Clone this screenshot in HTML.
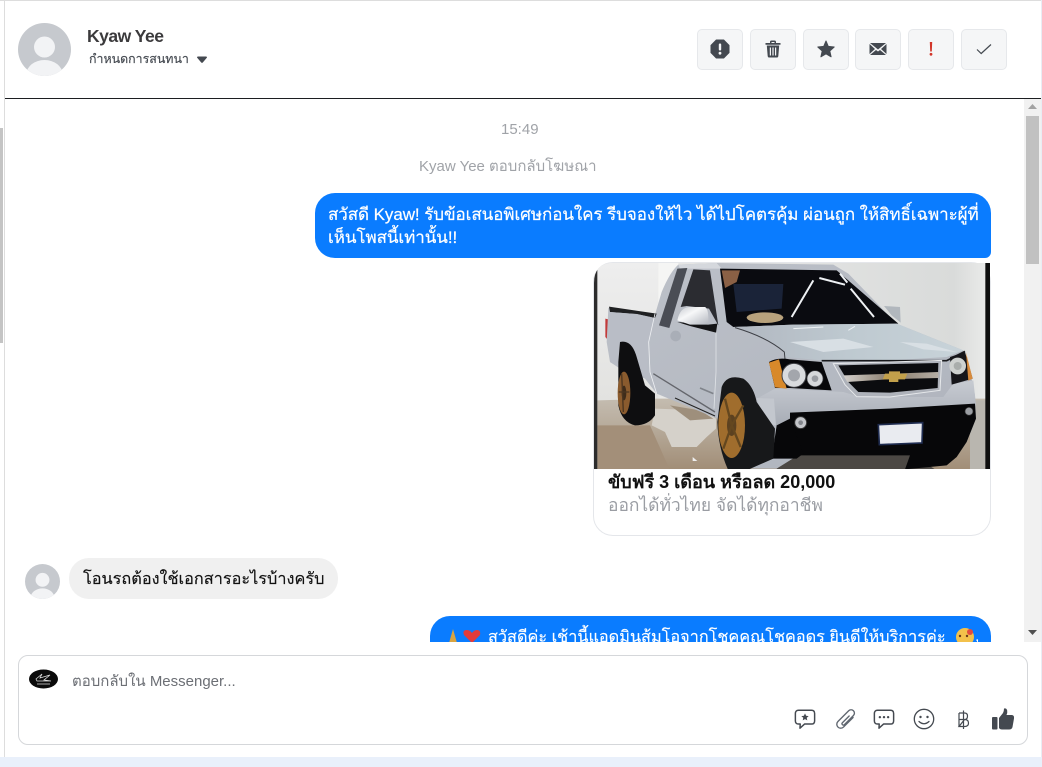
<!DOCTYPE html>
<html lang="th"><head><meta charset="utf-8"><style>
html,body{margin:0;padding:0;width:1042px;height:767px;overflow:hidden;background:#fff}
*{box-sizing:border-box}
body{font-family:"Liberation Sans","Noto Sans CJK SC",sans-serif;position:relative}
.a{position:absolute}
.t{position:absolute;white-space:nowrap}
.btn{position:absolute;top:29px;width:46px;height:41px;background:#f5f6f7;border:1px solid #e6e8eb;border-radius:5px}
.btn svg{position:absolute;left:12px;top:9px}
</style></head><body>
<div class="a" style="left:0;top:757px;width:1042px;height:10px;background:#e9f0fb"></div>
<div class="a" style="left:0;top:0;width:1042px;height:1px;background:#ddd"></div>
<div class="a" style="left:4px;top:0;width:1px;height:757px;background:#ddd"></div>
<div class="a" style="left:1041px;top:0;width:1px;height:757px;background:#e8edf5"></div>
<div class="a" style="left:0;top:128px;width:3px;height:215px;background:#c4c4c4"></div>
<div class="a" style="left:5px;top:98px;width:1036px;height:1px;background:#1c1e21"></div>

<svg class="a" style="left:18px;top:23px" width="53" height="53" viewBox="0 0 53 53"><defs><clipPath id="c1"><circle cx="26.5" cy="26.5" r="26.5"/></clipPath></defs><circle cx="26.5" cy="26.5" r="26.5" fill="#c6c9ce"/><g clip-path="url(#c1)"><circle cx="26.5" cy="24" r="10.500" fill="#f2f3f5"/><ellipse cx="26.5" cy="51" rx="18" ry="14" fill="#f2f3f5"/></g></svg>
<div class="t" style="left:87px;top:25px;font-size:17.500px;line-height:22px;font-weight:bold;color:#3b3a3c;letter-spacing:-.5px">Kyaw Yee</div>
<div class="t" style="left:89px;top:50px;font-size:12.400px;line-height:18px;color:#444950;-webkit-text-stroke:.15px #444950">กำหนดการสนทนา</div>
<svg class="a" style="left:196px;top:56px" width="12" height="8" viewBox="0 0 12 8"><path d="M1 1.500Q1 .5 2 .5H10Q11 .5 11 1.500L6.800 6.500Q6 7.300 5.200 6.500Z" fill="#444950"/></svg>

<div class="btn" style="left:697px"><svg width="20" height="20" viewBox="0 0 20 20"><path d="M6.300 1H13.700L19 6.300V13.700L13.700 19H6.300L1 13.700V6.300Z" fill="#444950" stroke="#444950" stroke-linejoin="round"/><rect x="8.800" y="4.500" width="2.400" height="7" rx="1" fill="#f5f6f7"/><circle cx="10" cy="14.200" r="1.400" fill="#f5f6f7"/></svg></div>
<div class="btn" style="left:750px"><svg width="20" height="20" viewBox="0 0 20 20" fill="#444950"><path d="M2.500 4H17.500V5.800H2.500ZM7 3Q7 1.500 8.500 1.500H11.500Q13 1.500 13 3V4H11.500V3H8.500V4H7Z"/><path d="M3.800 6.500H16.200L15.300 17.200Q15.100 18.500 14 18.500H6Q4.900 18.500 4.700 17.200ZM6.800 8.500V16.500H8V8.500ZM9.400 8.500V16.500H10.600V8.500ZM12 8.500V16.500H13.200V8.500Z" fill-rule="evenodd"/></svg></div>
<div class="btn" style="left:803px"><svg width="20" height="20" viewBox="0 0 20 20"><path d="M10 2L12.300 7.400L18.200 8L13.800 12L15.100 17.800L10 14.800L4.900 17.800L6.200 12L1.800 8L7.700 7.400Z" fill="#444950" stroke="#444950" stroke-linejoin="round"/></svg></div>
<div class="btn" style="left:855px"><svg width="20" height="20" viewBox="0 0 20 20" fill="#444950"><path d="M2 4H18L10 10.500ZM1.500 5L7 10L1.500 15ZM18.500 5V15L13 10ZM2 16L8 11L10 12.500L12 11L18 16Z"/></svg></div>
<div class="btn" style="left:908px"><svg width="20" height="20" viewBox="0 0 20 20" fill="#d2352a"><path d="M8.800 3H11.200L10.800 12.500H9.200Z"/><circle cx="10" cy="15.300" r="1.400"/></svg></div>
<div class="btn" style="left:961px"><svg width="20" height="20" viewBox="0 0 20 20"><path d="M3 10.500L7.200 14.500L17 5.500" fill="none" stroke="#444950" stroke-width="1.200"/></svg></div>

<div class="t" style="left:501px;top:121px;font-size:15px;line-height:18px;color:#a0a3a8">15:49</div>
<div class="t" style="left:419px;top:158px;font-size:15px;line-height:18px;color:#a0a3a8">Kyaw Yee ตอบกลับโฆษณา</div>

<div class="a" style="left:315px;top:193px;width:676px;height:65px;background:#0a7cff;border-radius:20px 20px 6px 20px"></div>
<div class="t" style="left:328px;top:203px;font-size:17px;line-height:23px;color:#fff;letter-spacing:-.08px;-webkit-text-stroke:.2px #fff">สวัสดี Kyaw! รับข้อเสนอพิเศษก่อนใคร รีบจองให้ไว ได้ไปโคตรคุ้ม ผ่อนถูก ให้สิทธิ์เฉพาะผู้ที่</div>
<div class="t" style="left:328px;top:226px;font-size:17px;line-height:23px;color:#fff;letter-spacing:-.08px;-webkit-text-stroke:.2px #fff">เห็นโพสนี้เท่านั้น!!</div>

<div class="a" style="left:593px;top:262px;width:398px;height:274px;border:1px solid #e4e6ea;border-radius:20px;background:#fff"></div>
<svg class="a" style="left:594px;top:263px" width="396" height="206" viewBox="0 0 396 206">
<defs>
<clipPath id="ic"><path d="M20 0H396V206H0V20Q0 0 20 0Z"/></clipPath>
<linearGradient id="wl" x1="0" y1="0" x2="1" y2="0"><stop offset="0" stop-color="#e9e9e7"/><stop offset=".5" stop-color="#e2e3e2"/><stop offset=".9" stop-color="#d9dbda"/><stop offset="1" stop-color="#eeeeed"/></linearGradient>
<linearGradient id="wl2" x1="0" y1="0" x2="0" y2="1"><stop offset="0" stop-color="#eeeeee"/><stop offset="1" stop-color="#e2e2e0"/></linearGradient>
<linearGradient id="fl" x1="0" y1="0" x2="0" y2="1"><stop offset="0" stop-color="#c4bcb0"/><stop offset=".4" stop-color="#b7ab9b"/><stop offset="1" stop-color="#a18d76"/></linearGradient>
<linearGradient id="bd" x1="0" y1="0" x2="1" y2="1"><stop offset="0" stop-color="#bdc1c9"/><stop offset="1" stop-color="#aeb3bc"/></linearGradient>
<linearGradient id="bp" x1="0" y1="0" x2="0" y2="1"><stop offset="0" stop-color="#c7cbd2"/><stop offset="1" stop-color="#a7acb5"/></linearGradient>
<linearGradient id="hd" x1="0" y1="0" x2="1" y2="0"><stop offset="0" stop-color="#b1b7c0"/><stop offset=".5" stop-color="#bec9d0"/><stop offset="1" stop-color="#c8d3d9"/></linearGradient>
<linearGradient id="mr" x1="0" y1="0" x2="1" y2="1"><stop offset="0" stop-color="#c7cad0"/><stop offset=".4" stop-color="#f7f8f9"/><stop offset="1" stop-color="#b3b7bf"/></linearGradient>
<linearGradient id="ch" x1="0" y1="0" x2="1" y2="0"><stop offset="0" stop-color="#d3d0cc"/><stop offset=".5" stop-color="#877a6a"/><stop offset="1" stop-color="#b5aea5"/></linearGradient>
</defs>
<g clip-path="url(#ic)">
<g transform="translate(-4 -1) scale(.33333)">
<rect x="12" y="0" width="1200" height="625" fill="url(#wl)"/>
<rect x="22" y="0" width="183" height="420" fill="url(#wl2)"/>
<rect x="205" y="0" width="60" height="140" fill="#f5f5f4"/>
<path d="M22 415L200 410L1188 410V625H22Z" fill="url(#fl)"/>
<rect x="1140" y="415" width="48" height="210" fill="#b9b6af"/>
<path d="M22 490H180L240 625H22Z" fill="#a38f79"/>
<path d="M195 440L340 445L378 470V500L350 525L320 555H245L225 510L185 490Z" fill="#d5d1ca"/>
<path d="M240 430L330 445L370 470L300 475Z" fill="#9e8f7c"/>
<path d="M308 585L322 597H308Z" fill="#eee"/>
<path d="M560 575H960L1040 625H560Z" fill="#4c4844"/>
<path d="M46 170L55 172L52 232L46 225Z" fill="#c23a3a"/>

<path d="M55 138L195 158L215 90Q240 30 265 8L380 3L730 8L775 35L920 185L1020 225L1120 265L1145 350L1155 400L1158 470L1130 540L1100 570L980 570L640 570L560 620H420L382 470L200 395L165 350L90 320L60 300L50 240Z" fill="url(#bd)"/>
<path d="M57 134L200 155L195 168L140 156L60 150Z" fill="#1f2022"/>
<path d="M60 150L140 156L195 168L175 240L170 325L95 320L60 300Z" fill="#b9bdc6"/>
<path d="M265 8L380 3L395 20H290L270 20Z" fill="#d5d8dd"/>
<path d="M390 20L740 25L925 185L610 188L430 195L410 180Z" fill="#0a0b10"/>
<path d="M430 66L580 66L575 140L440 150Z" fill="#1a2338"/>
<path d="M395 25H450L440 60L405 78Z" fill="#8a6045"/>
<ellipse cx="525" cy="167" rx="55" ry="16" fill="#b8a27c"/>
<path d="M605 165L670 55M688 48L765 68M750 35L772 62M782 80L852 165" stroke="#eef1f4" stroke-width="6" fill="none"/>
<path d="M882 132L930 135L932 182L905 160Z" fill="#b1b7bd"/>

<path d="M207 190L262 20L292 18L238 198Z" fill="#4a4d55"/>
<path d="M272 135L310 22L360 25L385 190L357 140L290 132Z" fill="#2b2c31"/>
<path d="M262 180L300 192L378 212L382 185L355 188Z" fill="#141416"/>
<path d="M262 175Q270 135 300 135H345Q357 140 355 188L300 188Z" fill="url(#mr)"/>
<path d="M195 155L176 240L180 330L200 395" stroke="#eef0f3" stroke-width="2.500" fill="none"/>
<path d="M378 212V330L372 440" stroke="#dfe2e6" stroke-width="2.500" fill="none"/>
<circle cx="257" cy="222" r="16" fill="#a9aeb7"/>
<path d="M190 335L375 450" stroke="#64666c" stroke-width="4" fill="none"/>
<path d="M255 408L375 462" stroke="#222" stroke-width="3" fill="none"/>
<path d="M330 378L370 395" stroke="#7f838a" stroke-width="5" fill="none"/>

<path d="M430 195L610 188L920 185L1020 225L1120 265L1070 285L900 295L695 295L585 285L580 265Q530 225 430 195Z" fill="url(#hd)"/>
<path d="M435 197Q530 225 583 270L585 292" stroke="#3d3f45" stroke-width="3" fill="none"/>
<path d="M600 240L760 230L850 255L700 270ZM930 240L1010 245L1100 270L1000 262Z" fill="#d8dfe4"/>
<path d="M695 296H1070L1125 268" stroke="#18191c" stroke-width="5" fill="none"/>
<path d="M775 205L795 193M610 200L700 195" stroke="#eef2f5" stroke-width="3"/>

<path d="M500 410L555 380L725 388L760 390L810 405H1060L1090 365L1150 355L1158 430L800 452L620 465L560 492L510 470Z" fill="url(#bp)"/>

<path d="M537 300Q560 285 600 292L695 300L725 385L600 378L555 378Z" fill="#07070a"/>
<path d="M537 302L567 292L590 380L555 376Z" fill="#d8892a"/>
<circle cx="612" cy="340" r="36" fill="#d9dbde" stroke="#3e3f44" stroke-width="3"/>
<circle cx="612" cy="340" r="18" fill="#a3a6ac"/>
<circle cx="675" cy="350" r="24" fill="#d6d8db" stroke="#3e3f44" stroke-width="2"/>
<circle cx="675" cy="350" r="10" fill="#9a9da3"/>

<g transform="translate(600 0)">
<path d="M480 285L525 270L548 350L485 368Z" fill="#16161a"/>
<circle cx="503" cy="312" r="25" fill="#ced1cf"/>
<circle cx="503" cy="312" r="12" fill="#a9adab"/>
<path d="M528 272L548 350L535 356Z" fill="#d68a3c"/>
<path d="M130 305L455 295L450 385L300 405L200 404L165 368Z" fill="#aeb2ba" stroke="#e6e8eb" stroke-width="3"/>
<path d="M145 310L445 303L443 378L300 392L205 390L175 360Z" fill="#0b0c0f"/>
<path d="M160 340L445 330V348L290 352L172 360Z" fill="url(#ch)"/>
<path d="M297 328H330V335H352L345 352H325V360H297V352H278L285 335H297Z" fill="#c2a04b"/>
<path d="M0 452L300 440L555 425L558 470L530 540L500 585L470 610L345 622L360 580H0Z" fill="#070709"/>
<circle cx="32" cy="482" r="18" fill="#c4c6ca" stroke="#333" stroke-width="3"/>
<circle cx="32" cy="482" r="7" fill="#83868c"/>
<circle cx="537" cy="448" r="12" fill="#9b9ea3" stroke="#333" stroke-width="2"/>
<path d="M265 488L398 482L396 543L268 548Z" fill="#e9ebf0" stroke="#1f2c50" stroke-width="5"/>
</g>
<path d="M600 470L560 490L545 590L620 590L640 575Z" fill="#070709"/>
<path d="M500 408L552 410L558 490L522 482Z" fill="#c3c7ce"/>

<path d="M90 240Q125 232 140 285L165 370L195 395L195 460Q175 490 135 490Q95 480 85 430L85 300Z" fill="#0e0e10"/>
<ellipse cx="102" cy="393" rx="19" ry="64" fill="#8a5b2e"/>
<ellipse cx="102" cy="393" rx="7" ry="22" fill="#3f2c1a"/>
<path d="M95 335L100 450M86 390H118" stroke="#4b3520" stroke-width="4"/>
<path d="M395 375Q410 335 460 350Q490 370 500 420L555 500L550 590L470 625H415Q385 560 382 480Z" fill="#17181a"/>
<ellipse cx="425" cy="490" rx="40" ry="98" fill="#a06d2d"/>
<ellipse cx="425" cy="490" rx="14" ry="32" fill="#5c4120"/>
<path d="M405 410L425 490L460 430M425 490L400 560M425 490L452 555" stroke="#64471f" stroke-width="7" fill="none"/>
<rect x="12" y="0" width="10" height="625" fill="#2c2c2c"/>
<rect x="1186" y="0" width="20" height="625" fill="#0f0f0f"/>
</g>
</g></svg>
<div class="t" style="left:608px;top:472px;font-size:18px;line-height:21px;font-weight:bold;color:#111">ขับฟรี 3 เดือน หรือลด 20,000</div>
<div class="t" style="left:608px;top:495px;font-size:17.400px;line-height:21px;color:#9a9da3">ออกได้ทั่วไทย จัดได้ทุกอาชีพ</div>

<svg class="a" style="left:25px;top:564px" width="35" height="35" viewBox="0 0 53 53"><defs><clipPath id="c2"><circle cx="26.5" cy="26.5" r="26.5"/></clipPath></defs><circle cx="26.5" cy="26.5" r="26.5" fill="#c6c9ce"/><g clip-path="url(#c2)"><circle cx="26.5" cy="24" r="10.500" fill="#f2f3f5"/><ellipse cx="26.5" cy="51" rx="18" ry="14" fill="#f2f3f5"/></g></svg>
<div class="a" style="left:69px;top:558px;width:269px;height:41px;background:#f0f0f0;border-radius:20px"></div>
<div class="t" style="left:83px;top:568px;font-size:16.300px;line-height:22px;color:#111;-webkit-text-stroke:.15px #111">โอนรถต้องใช้เอกสารอะไรบ้างครับ</div>

<div class="a" style="left:5px;top:616px;width:1019px;height:26px;overflow:hidden">
<div class="a" style="left:425px;top:0;width:561px;height:60px;background:#0a7cff;border-radius:20px"></div>
<svg class="a" style="left:441px;top:12px" width="36" height="16" viewBox="0 0 36 16"><path d="M7 1L11 15H3Z" fill="#d9a441"/><path d="M27 15L19 7Q17 2 22 2Q25 2 27 5Q29 2 32 2Q36 2 35 7Z" fill="#e33b3b" transform="translate(-1 0)"/></svg>
<div class="t" style="left:483px;top:10px;font-size:16.250px;line-height:22px;color:#fff;-webkit-text-stroke:.15px #fff">สวัสดีค่ะ เช้านี้แอดมินส้มโอจากโชคคูณโชคอดร ยินดีให้บริการค่ะ</div>
<svg class="a" style="left:950px;top:11px" width="20" height="18" viewBox="0 0 20 18"><circle cx="10" cy="10" r="9" fill="#f3c14b"/><circle cx="15" cy="5" r="3" fill="#e14b3f"/><circle cx="5" cy="9" r="1.200" fill="#6b3a1c"/><circle cx="12" cy="9" r="1.200" fill="#6b3a1c"/></svg>
<div class="t" style="left:970px;top:10px;font-size:16px;line-height:22px;color:#fff">,</div>
</div>

<div class="a" style="left:1024px;top:99px;width:17px;height:543px;background:#f1f1f1"></div>
<div class="a" style="left:1026px;top:116px;width:13px;height:148px;background:#c1c1c1"></div>
<svg class="a" style="left:1028px;top:104px" width="9" height="6"><path d="M4.500 0L9 5H0Z" fill="#a3a3a3"/></svg>
<svg class="a" style="left:1028px;top:630px" width="9" height="6"><path d="M0 0H9L4.500 5Z" fill="#505050"/></svg>

<div class="a" style="left:18px;top:655px;width:1010px;height:90px;border:1px solid #d5d7da;border-radius:10px;background:#fff"></div>
<svg class="a" style="left:29px;top:669px" width="29" height="20" viewBox="0 0 29 20"><ellipse cx="14.500" cy="10" rx="14.500" ry="9.500" fill="#0a0a0a"/><path d="M7 10L13 5L11 9L21 6L15 11L22 12H8ZM8 15H21" stroke="#ddd" stroke-width=".8" fill="none"/></svg>
<div class="t" style="left:72px;top:673px;font-size:15px;line-height:18px;color:#6c6f75">ตอบกลับใน Messenger...</div>

<svg class="a" style="left:794px;top:708px" width="22" height="22" viewBox="0 0 24 24"><path d="M5 2.500H19Q22.500 2.500 22.500 6V14Q22.500 17.500 19 17.500H11.500L6.500 22L6.800 17.500H5Q1.500 17.500 1.500 14V6Q1.500 2.500 5 2.500Z" fill="none" stroke="#444950" stroke-width="1.600" stroke-linejoin="round"/><path d="M12 5.800L13.200 8.500L16 8.800L13.900 10.700L14.500 13.500L12 12.100L9.500 13.500L10.100 10.700L8 8.800L10.800 8.500Z" fill="#444950"/></svg>
<svg class="a" style="left:832px;top:706px" width="27" height="27" viewBox="0 0 24 24"><path d="M15.500 6V18a3.500 3.500 0 0 1-7 0V4.500a3 3 0 0 1 6 0V16a1.200 1.200 0 0 1-2.400 0V7.500" fill="none" stroke="#606770" stroke-width="1.200" stroke-linecap="round" transform="rotate(45 12 12)"/></svg>
<svg class="a" style="left:873px;top:708px" width="22" height="22" viewBox="0 0 24 24"><path d="M5 2.500H19Q22.500 2.500 22.500 6V14Q22.500 17.500 19 17.500H11.500L6.500 22L6.800 17.500H5Q1.500 17.500 1.500 14V6Q1.500 2.500 5 2.500Z" fill="none" stroke="#444950" stroke-width="1.600" stroke-linejoin="round"/><circle cx="7.500" cy="10" r="1.300" fill="#444950"/><circle cx="12" cy="10" r="1.300" fill="#444950"/><circle cx="16.500" cy="10" r="1.300" fill="#444950"/></svg>
<svg class="a" style="left:913px;top:708px" width="22" height="22" viewBox="0 0 22 22"><circle cx="11" cy="11" r="9.700" fill="none" stroke="#444950" stroke-width="1.300"/><circle cx="7.500" cy="9" r="1.200" fill="#444950"/><circle cx="14.500" cy="9" r="1.200" fill="#444950"/><path d="M6 13.500Q11 18 16 13.500" fill="none" stroke="#444950" stroke-width="1.300" stroke-linecap="round"/></svg>
<svg class="a" style="left:957px;top:710px" width="14" height="20" viewBox="0 0 14 20"><path d="M2 3H7.500Q10.500 3 10.500 6Q10.500 9.500 7.500 9.500H2M7.500 9.500Q11.500 9.500 11.500 13Q11.500 16.500 7.500 16.500H2ZM2 3V16.500M6.500 .5V19" fill="none" stroke="#444950" stroke-width="1.200"/></svg>
<svg class="a" style="left:991px;top:707px" width="24" height="24" viewBox="0 0 24 24" fill="#444950"><rect x="1" y="10" width="5.500" height="12.500" rx="1"/><path d="M8 11L12 6Q13 4 13 1.500Q15.500 .8 16.200 3.500Q16.600 6 15.500 8H21Q23.500 8.500 23 11.500L21.500 20Q21 22.500 18 22.500H11Q9 22.500 8 21Z"/></svg>
</body></html>
